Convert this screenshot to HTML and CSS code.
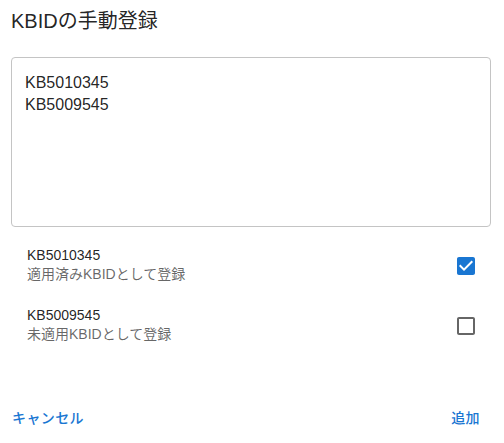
FILE: index.html
```html
<!DOCTYPE html>
<html lang="ja">
<head>
<meta charset="utf-8">
<title>KBIDの手動登録</title>
<link rel="stylesheet" href="styles.css">
</head>
<body>
<div class="dialog">
  <h2 class="title">KBIDの手動登録</h2>
  <textarea class="input" readonly>KB5010345
KB5009545</textarea>
  <ul class="list">
    <li class="item">
      <div class="texts">
        <div class="primary">KB5010345</div>
        <div class="secondary">適用済みKBIDとして登録</div>
      </div>
      <svg class="cb cb-on" viewBox="0 0 24 24" width="24" height="24"><path d="M19 3H5c-1.11 0-2 .9-2 2v14c0 1.1.89 2 2 2h14c1.11 0 2-.9 2-2V5c0-1.1-.89-2-2-2zm-9 14l-5-5 1.41-1.41L10 14.17l7.59-7.59L19 8l-9 9z"/></svg>
    </li>
    <li class="item">
      <div class="texts">
        <div class="primary">KB5009545</div>
        <div class="secondary">未適用KBIDとして登録</div>
      </div>
      <svg class="cb cb-off" viewBox="0 0 24 24" width="24" height="24"><path d="M19 5v14H5V5h14m0-2H5c-1.1 0-2 .9-2 2v14c0 1.1.9 2 2 2h14c1.1 0 2-.9 2-2V5c0-1.1-.9-2-2-2z"/></svg>
    </li>
  </ul>
  <div class="actions">
    <button class="btn">キャンセル</button>
    <button class="btn">追加</button>
  </div>
</div>
</body>
</html>
```
FILE: styles.css
```css
html, body {
  margin: 0;
  padding: 0;
  background: #fff;
}
body {
  font-family: "Liberation Sans", "Noto Sans CJK JP", sans-serif;
  color: rgba(0, 0, 0, 0.87);
}
.dialog {
  padding: 5px 13px 0 11px;
}
.title {
  margin: 0;
  font-size: 20px;
  font-weight: 400;
  line-height: 32px;
}
.input {
  display: block;
  box-sizing: border-box;
  width: 480px;
  height: 170px;
  margin: 20px 0 0 0;
  padding: 14px 13px;
  border: 1px solid #c4c4c4;
  border-radius: 4px;
  font-family: "Liberation Sans", "Noto Sans CJK JP", sans-serif;
  font-size: 16px;
  line-height: 22px;
  color: rgba(0, 0, 0, 0.87);
  resize: none;
  outline: none;
  overflow: hidden;
  background: #fff;
}
.list {
  list-style: none;
  margin: 9px 0 0 0;
  padding: 0;
}
.item {
  display: flex;
  align-items: center;
  justify-content: space-between;
  height: 60px;
  padding: 0 13px 0 16px;
}
.texts {
  display: flex;
  flex-direction: column;
  padding-bottom: 3px;
}
.primary {
  font-size: 14px;
  line-height: 19px;
  color: rgba(0, 0, 0, 0.87);
}
.secondary {
  font-size: 14px;
  line-height: 19px;
  color: rgba(0, 0, 0, 0.6);
}
.cb {
  display: block;
}
.cb-on {
  fill: #1976d2;
}
.cb-off {
  fill: rgba(0, 0, 0, 0.6);
}
.actions {
  display: flex;
  justify-content: space-between;
  margin-top: 43px;
  padding: 0 11px 0 1px;
}
.btn {
  height: 36px;
  padding: 0;
  border: none;
  background: none;
  font-family: Roboto, "Noto Sans CJK JP", sans-serif;
  font-size: 14px;
  font-weight: 500;
  letter-spacing: 0.02857em;
  color: #1976d2;
  cursor: pointer;
}
```
